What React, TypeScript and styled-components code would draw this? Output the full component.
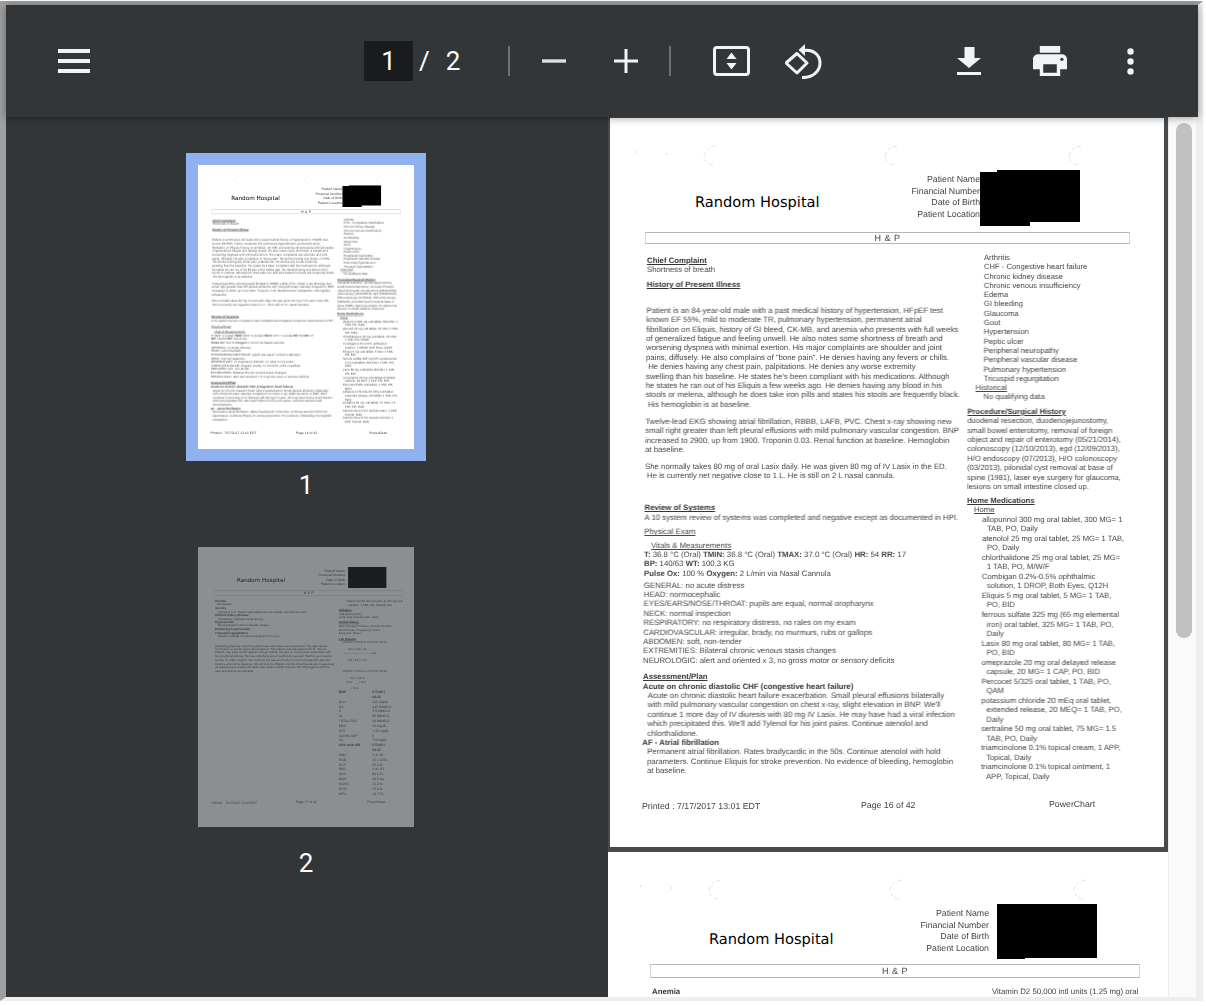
import React from "react";
import styled, { createGlobalStyle } from "styled-components";

const Global = createGlobalStyle`
  html, body { margin: 0; padding: 0; background: #fff; overflow: hidden; }
  * { box-sizing: border-box; }
`;

const Frame = styled.div`
  width: 1203px;
  height: 1000px;
  margin-top: 1px;
  border-style: solid;
  border-width: 4px 5px 4px 6px;
  border-color: #9f9f9f #eeeeee #eeeeee #9f9f9f;
  display: flex;
  flex-direction: column;
  background: #323639;
  font-family: Roboto, "Liberation Sans", sans-serif;
`;

const Toolbar = styled.header`
  height: 112px;
  flex: none;
  display: flex;
  align-items: center;
  padding-left: 52px;
  background: #323639;
  color: #fff;
  position: relative;
  z-index: 2;
  box-shadow: 0 1px 8px rgba(0, 0, 0, 0.38);
`;

const Icon = styled.svg<{ $ml?: number; $muted?: boolean }>`
  flex: none;
  display: block;
  margin-left: ${(p) => p.$ml ?? 0}px;
  fill: ${(p) => (p.$muted ? "#dcdedf" : "#f1f3f4")};
`;

const PageBox = styled.div`
  width: 49px;
  height: 40px;
  margin-left: 274px;
  background: #191b1c;
  font-size: 26px;
  line-height: 40px;
  text-align: center;
  flex: none;
`;

const ToolText = styled.span<{ $ml: number }>`
  font-size: 26px;
  line-height: 40px;
  margin-left: ${(p) => p.$ml}px;
  flex: none;
`;

const Divider = styled.div<{ $ml: number }>`
  width: 2px;
  height: 30px;
  margin-left: ${(p) => p.$ml}px;
  background: #6e7174;
  flex: none;
`;

const Main = styled.main`
  display: flex;
  height: 880px;
  flex: none;
`;

const Sidebar = styled.aside`
  width: 602px;
  flex: none;
  display: flex;
  flex-direction: column;
  align-items: center;
  padding: 48px 2px 0 0;
  background: #323639;
  overflow: hidden;
`;

const Thumb = styled.div<{ $h: number; $selected?: boolean }>`
  width: 216px;
  height: ${(p) => p.$h}px;
  flex: none;
  overflow: hidden;
  background: #fff;
  outline: ${(p) => (p.$selected ? "12px solid #8fb2ef" : "none")};
  opacity: ${(p) => (p.$selected ? 1 : 0.44)};
`;

const ThumbScale = styled.div<{ $s: number }>`
  transform: scale(${(p) => p.$s});
  transform-origin: 0 0;
  width: max-content;
`;

const ThumbLabel = styled.div`
  margin-top: 21px;
  margin-bottom: 47px;
  font-size: 26px;
  line-height: 30px;
  color: #fff;
  text-align: center;
`;

const Viewer = styled.section`
  width: 560px;
  flex: none;
  overflow: hidden;
  background: #484b4e;
  padding-top: 1px;
  display: flex;
  flex-direction: column;
  gap: 5px;
`;

const PageSlot = styled.div<{ $ml: number }>`
  flex: none;
  padding-left: ${(p) => p.$ml}px;
`;

const Sheet = styled.article<{ $w: number; $h: number }>`
  width: ${(p) => p.$w}px;
  height: ${(p) => p.$h}px;
  background: #fff;
  overflow: hidden;
  font-family: "Liberation Sans", Arial, sans-serif;
  font-size: 8.75px;
  color: #444;
  text-rendering: geometricPrecision;
`;

const Specks = styled.svg`
  display: block;
  fill: none;
  stroke: #dcdcdc;
  stroke-width: 0.8;
  stroke-dasharray: 5 2 3 3;
  filter: blur(0.4px);
`;

const HeaderRow = styled.div<{ $pl: number; $pr: number; $h: number }>`
  display: flex;
  align-items: flex-start;
  height: ${(p) => p.$h}px;
  padding-left: ${(p) => p.$pl}px;
  padding-right: ${(p) => p.$pr}px;
`;

const Title = styled.h1<{ $mt: number }>`
  flex: 1;
  margin: ${(p) => p.$mt}px 0 0;
  font-family: "DejaVu Sans", sans-serif;
  font-size: 14.6px;
  font-weight: 400;
  line-height: 18px;
  color: #000;
  white-space: nowrap;
`;

const Labels = styled.div<{ $mr: number }>`
  margin-top: 4.2px;
  margin-right: ${(p) => p.$mr}px;
  text-align: right;
  line-height: 11.6px;
  white-space: nowrap;
  filter: blur(0.4px);
`;

const Redaction = styled.svg`
  flex: none;
  display: block;
  fill: #000;
`;

const SectionBar = styled.div<{ $ml: number; $w: number; $mt: number; $h: number }>`
  margin-top: ${(p) => p.$mt}px;
  margin-left: ${(p) => p.$ml}px;
  width: ${(p) => p.$w}px;
  height: ${(p) => p.$h}px;
  border: 1px solid #b5b5b5;
  border-left-color: #d5d5d5;
  border-right-color: #d5d5d5;
  text-align: center;
  font-size: 9px;
  line-height: ${(p) => p.$h - 2}px;
  letter-spacing: 0.5px;
  filter: blur(0.35px);
`;

const Columns = styled.div<{ $mt: number; $pl: number }>`
  display: grid;
  grid-template-columns: 321px 1fr;
  margin-top: ${(p) => p.$mt}px;
  padding-left: ${(p) => p.$pl}px;
`;

const Column = styled.div<{ $skew: number; $pt?: number; $fs: number }>`
  transform: skewX(${(p) => p.$skew}deg);
  transform-origin: 0 0;
  padding-top: ${(p) => p.$pt ?? 0}px;
  font-size: ${(p) => p.$fs}px;
  filter: blur(0.4px);
  white-space: nowrap;
`;

const Block = styled.div<{ $mt?: number; $lh?: number }>`
  margin-top: ${(p) => p.$mt ?? 0}px;
  line-height: ${(p) => p.$lh ?? 9.4}px;
`;

const Line = styled.div<{ $i?: number; $b?: boolean; $u?: boolean }>`
  height: 1lh;
  padding-left: ${(p) => p.$i ?? 0}px;
  font-weight: ${(p) => (p.$b ? 700 : 400)};
  text-decoration: ${(p) => (p.$u ? "underline" : "none")};
  color: ${(p) => (p.$b ? "#333" : "inherit")};
`;

const LabRow = styled.div<{ $b?: boolean }>`
  display: grid;
  grid-template-columns: 87px 1fr;
  height: 12.5px;
  line-height: 12.5px;
  font-size: 8.75px;
  font-weight: ${(p) => (p.$b ? 700 : 400)};
`;

const Footer = styled.div<{ $pl: number; $mt: number; $c1: number; $c2: number }>`
  display: grid;
  grid-template-columns: ${(p) => p.$c1}px ${(p) => p.$c2}px 1fr;
  margin-top: ${(p) => p.$mt}px;
  padding-left: ${(p) => p.$pl}px;
  filter: blur(0.4px);
  line-height: 9.4px;
  white-space: nowrap;
`;

const FooterItem = styled.span<{ $drop: number }>`
  padding-top: ${(p) => p.$drop}px;
`;

const Scrollbar = styled.div`
  width: 30px;
  flex: none;
  background: #fafafa;
  border-left: 1px solid #efefef;
  border-right: 2px solid #eeeeee;
  padding: 6px 0 0 7px;
`;

const ScrollThumb = styled.div`
  width: 16px;
  height: 515px;
  border-radius: 8px;
  background: #c1c1c1;
`;

type L = { t: React.ReactNode; i?: number; b?: boolean; u?: boolean };
const l = (t: React.ReactNode, i?: number, b?: boolean, u?: boolean): L => ({ t, i, b, u });

const Lines = ({ items, mt, lh }: { items: L[]; mt?: number; lh?: number }) => (
  <Block $mt={mt} $lh={lh}>
    {items.map((x, n) => (
      <Line key={n} $i={x.i} $b={x.b} $u={x.u}>
        {x.t}
      </Line>
    ))}
  </Block>
);

const SpeckMarks = ({ shift, w }: { shift: number; w: number }) => (
  <Specks width={w} height={52} viewBox={`0 0 ${w} 52`}>
    {[100, 281, 465].map((x) => (
      <path
        key={x}
        transform={`translate(${x + shift} 38)`}
        d="M6 -10 Q-5 -9 -6 1 Q-5 8 3 9"
      />
    ))}
    <path d={`M${25 + shift} 34h1M${56 + shift} 36h1`} stroke="#aaa" />
  </Specks>
);

const PatientLabels = ({ mr }: { mr: number }) => (
  <Labels $mr={mr}>
    <div>Patient Name</div>
    <div>Financial Number</div>
    <div>Date of Birth</div>
    <div>Patient Location</div>
  </Labels>
);

const hpi = [
  "Patient is an 84-year-old male with a past medical history of hypertension, HFpEF test",
  "known EF 55%, mild to moderate TR, pulmonary hypertension, permanent atrial",
  "fibrillation on Eliquis, history of GI bleed, CK-MB, and anemia who presents with full weeks",
  "of generalized fatigue and feeling unwell.  He also notes some shortness of breath and",
  "worsening dyspnea with minimal exertion.  His major complaints are shoulder and joint",
  "pains, diffusely.  He also complains of \"bone pain\".  He denies having any fevers or chills.",
  "\u00a0He denies having any chest pain, palpitations.  He denies any worse extremity",
  "swelling than his baseline.  He states he's been compliant with his medications.  Although",
  "he states he ran out of his Eliquis a few weeks ago.  He denies having any blood in his",
  "stools or melena, although he does take iron pills and states his stools are frequently black.",
  "\u00a0His hemoglobin is at baseline.",
].map((t) => l(t));

const PageOne = () => (
  <Sheet $w={554} $h={729}>
    <SpeckMarks shift={0} w={554} />
    <HeaderRow $pl={85} $pr={84} $h={56}>
      <Title $mt={24}>Random Hospital</Title>
      <PatientLabels mr={0} />
      <Redaction width={100} height={56} viewBox="0 0 100 56">
        <polygon points="0,2 17,2 17,0 100,0 100,52 50,52 50,56 0,56" />
      </Redaction>
    </HeaderRow>
    <SectionBar $ml={35} $w={485} $mt={6} $h={12}>H &amp; P</SectionBar>
    <Columns $mt={9.35} $pl={37}>
      <Column $skew={-0.55} $pt={2.95} $fs={7.8}>
        <Lines items={[l("Chief Complaint", 0, true, true), l("Shortness of breath")]} />
        <Lines mt={5.2} items={[l("History of Present Illness", 0, true, true)]} />
        <Lines mt={16.6} items={hpi} />
        <Lines
          mt={7.6}
          items={[
            l("Twelve-lead EKG showing atrial fibrillation, RBBB, LAFB, PVC.  Chest x-ray showing new"),
            l("small right greater than left pleural effusions with mild pulmonary vascular congestion.  BNP"),
            l("increased to 2900, up from 1900.  Troponin 0.03.  Renal function at baseline.  Hemoglobin"),
            l("at baseline."),
          ]}
        />
        <Lines
          mt={7.4}
          items={[
            l("She normally takes 80 mg of oral Lasix daily.  He was given 80 mg of IV Lasix in the ED."),
            l("He is currently net negative close to 1 L.  He is still on 2 L nasal cannula.", 2),
          ]}
        />
        <Lines
          mt={22.9}
          items={[
            l("Review of Systems", 0, true, true),
            l("A 10 system review of systems was completed and negative except as documented in HPI."),
          ]}
        />
        <Lines mt={5.2} items={[l("Physical Exam", 0, false, true)]} />
        <Lines
          mt={3.9}
          items={[
            l("Vitals & Measurements", 7, false, true),
            l(<><b>T:</b> 36.8 °C (Oral) <b>TMIN:</b> 36.8 °C (Oral) <b>TMAX:</b> 37.0 °C (Oral) <b>HR:</b> 54 <b>RR:</b> 17</>),
            l(<><b>BP:</b> 140/63 <b>WT:</b> 100.3 KG</>),
            l(<><b>Pulse Ox:</b> 100 % <b>Oxygen:</b> 2 L/min via Nasal Cannula</>),
          ]}
        />
        <Lines
          mt={2.4}
          items={[
            "GENERAL: no acute distress",
            "HEAD: normocephalic",
            "EYES/EARS/NOSE/THROAT: pupils are equal, normal oropharynx",
            "NECK: normal inspection",
            "RESPIRATORY: no respiratory distress, no rales on my exam",
            "CARDIOVASCULAR: irregular, brady, no murmurs, rubs or gallops",
            "ABDOMEN: soft, non-tender",
            "EXTREMITIES: Bilateral chronic venous stasis changes",
            "NEUROLOGIC: alert and oriented x 3, no gross motor or sensory deficits",
          ].map((t) => l(t))}
        />
        <Lines
          mt={7.1}
          items={[
            l("Assessment/Plan", 0, true, true),
            l("Acute on chronic diastolic CHF (congestive heart failure)", 0, true),
            l("Acute on chronic diastolic heart failure exacerbation.  Small pleural effusions bilaterally", 5),
            l("with mild pulmonary vascular congestion on chest x-ray, slight elevation in BNP.  We'll", 5),
            l("continue 1 more day of IV diuresis with 80 mg IV Lasix.  He may have had a viral infection", 5),
            l("which precipitated this.  We'll add Tylenol for his joint pains.  Continue atenolol and", 5),
            l("chlorthalidone.", 5),
            l("AF - Atrial fibrillation", 0, true),
            l("Permanent atrial fibrillation.  Rates bradycardic in the 50s.  Continue atenolol with hold", 5),
            l("parameters.  Continue Eliquis for stroke prevention.  No evidence of bleeding, hemoglobin", 5),
            l("at baseline.", 5),
          ]}
        />
      </Column>
      <Column $skew={-0.2} $fs={7.65}>
        <Lines
          lh={9.3}
          items={[
            l("Arthritis", 16),
            l("CHF - Congestive heart failure", 16),
            l("Chronic kidney disease", 16),
            l("Chronic venous insufficiency", 16),
            l("Edema", 16),
            l("GI bleeding", 16),
            l("Glaucoma", 16),
            l("Gout", 16),
            l("Hypertension", 16),
            l("Peptic ulcer", 16),
            l("Peripheral neuropathy", 16),
            l("Peripheral vascular disease", 16),
            l("Pulmonary hypertension", 16),
            l("Tricuspid regurgitation", 16),
            l("Historical", 8, false, true),
            l("No qualifying data", 16),
          ]}
        />
        <Lines
          mt={5.15}
          items={[
            l("Procedure/Surgical History", 0, true, true),
            l("duodenal resection, duodenojejunostomy,"),
            l("small bowel enterotomy, removal of foreign"),
            l("object and repair of enterotomy (05/21/2014),"),
            l("colonoscopy (12/10/2013), egd (12/09/2013),"),
            l("H/O endoscopy (07/2013), H/O colonoscopy"),
            l("(03/2013), pilonidal cyst removal at base of"),
            l("spine (1981), laser eye surgery for glaucoma,"),
            l("lesions on small intestine closed up."),
          ]}
        />
        <Lines
          mt={4.4}
          lh={9.52}
          items={[
            l("Home Medications", 0, true, true),
            l("Home", 7, false, true),
            l("allopurinol 300 mg oral tablet, 300 MG= 1", 15),
            l("TAB, PO, Daily", 20),
            l("atenolol 25 mg oral tablet, 25 MG= 1 TAB,", 15),
            l("PO, Daily", 20),
            l("chlorthalidone 25 mg oral tablet, 25 MG=", 15),
            l("1 TAB, PO, M/W/F", 20),
            l("Combigan 0.2%-0.5% ophthalmic", 15),
            l("solution, 1 DROP, Both Eyes, Q12H", 20),
            l("Eliquis 5 mg oral tablet, 5 MG= 1 TAB,", 15),
            l("PO, BID", 20),
            l("ferrous sulfate 325 mg (65 mg elemental", 15),
            l("iron) oral tablet, 325 MG= 1 TAB, PO,", 20),
            l("Daily", 20),
            l("Lasix 80 mg oral tablet, 80 MG= 1 TAB,", 15),
            l("PO, BID", 20),
            l("omeprazole 20 mg oral delayed release", 15),
            l("capsule, 20 MG= 1 CAP, PO, BID", 20),
            l("Percocet 5/325 oral tablet, 1 TAB, PO,", 15),
            l("QAM", 20),
            l("potassium chloride 20 mEq oral tablet,", 15),
            l("extended release, 20 MEQ= 1 TAB, PO,", 20),
            l("Daily", 20),
            l("sertraline 50 mg oral tablet, 75 MG= 1.5", 15),
            l("TAB, PO, Daily", 20),
            l("triamcinolone 0.1% topical cream, 1 APP,", 15),
            l("Topical, Daily", 20),
            l("triamcinolone 0.1% topical ointment, 1", 15),
            l("APP, Topical, Daily", 20),
          ]}
        />
      </Column>
    </Columns>
    <Footer $pl={32} $mt={18} $c1={219} $c2={188}>
      <FooterItem $drop={2}>Printed : 7/17/2017 13:01 EDT</FooterItem>
      <FooterItem $drop={1}>Page 16 of 42</FooterItem>
      <FooterItem $drop={0}>PowerChart</FooterItem>
    </Footer>
  </Sheet>
);

const labs: [string, string, boolean?][] = [
  ["BMP", "07/16/17", true],
  ["", "08:32", true],
  ["GLU", "102 mg/dL"],
  ["NA", "142 MMOL/L"],
  ["K", "3.9 MMOL/L"],
  ["CL", "98 MMOL/L"],
  ["TOTAL CO2", "40 MMOL/L"],
  ["BUN", "26 mg/dL"],
  ["CRT", "1.20 mg/dL"],
  ["ANION GAP", "5"],
  ["CA", "7.8 mg/dL"],
  ["CBC with diff", "07/16/17", true],
  ["", "08:32", true],
  ["WBC", "3.4 / dl"],
  ["HGB", "10.1 G/DL"],
  ["HCT", "32.4 %"],
  ["RBC", "3.41 /FL"],
  ["MCV", "95.0 FL"],
  ["MCH", "29.5 pg"],
  ["MCHC", "31.2 %"],
  ["RDW", "13.9 %"],
  ["MPV", "10.7 FL"],
];

const PageTwo = () => (
  <Sheet $w={560} $h={720}>
    <SpeckMarks shift={7} w={560} />
    <HeaderRow $pl={101} $pr={71} $h={55}>
      <Title $mt={27}>Random Hospital</Title>
      <PatientLabels mr={8} />
      <Redaction width={100} height={55} viewBox="0 0 100 55">
        <polygon points="0,0 100,0 100,54 28,54 28,55 0,55" />
      </Redaction>
    </HeaderRow>
    <SectionBar $ml={42} $w={490} $mt={5} $h={14}>H &amp; P</SectionBar>
    <Columns $mt={9.3} $pl={44}>
      <Column $skew={0} $fs={7.8}>
        <Lines
          lh={9.15}
          items={[
            l("Anemia", 0, true),
            l("At baseline.", 5),
            l("Anemia", 0, true),
            l("Typical of iron.  Patient also takes Ferrous sulfate, will add folic acid.", 7),
            l("Chronic kidney disease", 0, true),
            l("At baseline.  Maintain renal dosing.", 7),
            l("Hypertension", 0, true),
            l("Blood pressure within tolerable targets.", 7),
            l("Pulmonary hypertension", 0, true),
            l("Tricuspid regurgitation", 0, true),
            l("Noted moderate on echocardiogram from prior.", 7),
          ]}
        />
        <Lines
          mt={14.8}
          items={[
            l("Attending physician note the patient was interviewed and examined.  The appropriate"),
            l("information in power chart was reviewed.  The patient was discussed with Dr. Steven."),
            l("Patient may have a mild degree of heart failure.  He was on some lower extremities with"),
            l("his peripheral edema.  He has underlying atrial insufficiency as well.  We'll try and ensure"),
            l("he has his daily weights.  We continue his rate and rhythm control on beta with atenolol."),
            l("Anemia around his baseline.  We will stop his Eliquis until the blood levels are in stationary"),
            l("as adjusted and ensure the heart rate under a better monitor.  He will progress with his"),
            l("care and activity as tolerated."),
          ]}
        />
      </Column>
      <Column $skew={0} $fs={7.85}>
        <Lines
          items={[
            l("Vitamin D2 50,000 intl units (1.25 mg) oral", 19),
            l("capsule, 1 TAB, PO, Weekly-Tue", 24),
          ]}
        />
        <Lines
          mt={5.2}
          items={[l("Allergies", 0, true, true), l("citalopram (rash)"), l("sulfa drug (muscle pain; rash)")]}
        />
        <Lines
          mt={3.8}
          items={[
            l("Social History", 0, true, true),
            l("Ever Smoked Tobacco: Former Smoker"),
            l("Alcohol Use: Frequency: None"),
            l("Drug use: Never"),
          ]}
        />
        <Lines mt={4.8} items={[l("Lab Results", 0, true, true), l("07/16/17 05:00 to 07/17/17 05:00", 10)]} />
        <Lines mt={8.8} items={[l("141 | 101 | 26", 24), l("\u2014\u2014\u2014\u2014\u2014\u2014\u2014\u2014\u2014 102", 12)]} />
        <Lines mt={8.2} items={[l("3.9 | 48 | 1.20", 24)]} />
        <Lines mt={19.1} items={[l("07/16/17 05:00 to 07/17/17 05:00", 10)]} />
        <Lines mt={9.1} items={[l("10.1 / 30.4", 30), l("3.4 / ___ \\ 101", 20)]} />
        <Lines mt={7} items={[l("/ 32.4", 32)]} />
        {labs.map(([a, b, bold], n) => (
          <LabRow key={n} $b={bold}>
            <span>{a}</span>
            <span>{b}</span>
          </LabRow>
        ))}
      </Column>
    </Columns>
    <Footer $pl={35} $mt={12} $c1={219} $c2={185}>
      <FooterItem $drop={1}>Printed : 7/17/2017 13:01 EDT</FooterItem>
      <FooterItem $drop={0}>Page 17 of 42</FooterItem>
      <FooterItem $drop={0}>PowerChart</FooterItem>
    </Footer>
  </Sheet>
);

export default function App() {
  return (
    <>
      <Global />
      <Frame>
        <Toolbar>
          <Icon width={32} height={24} viewBox="0 0 32 24">
            <rect y="0" width="32" height="4" />
            <rect y="10" width="32" height="4" />
            <rect y="20" width="32" height="4" />
          </Icon>
          <PageBox>1</PageBox>
          <ToolText $ml={6}>/</ToolText>
          <ToolText $ml={16}>2</ToolText>
          <Divider $ml={48} />
          <Icon $ml={32} $muted width={24} height={4} viewBox="0 0 24 4">
            <rect width="24" height="3.4" y="0.3" />
          </Icon>
          <Icon $ml={48} width={24} height={24} viewBox="0 0 24 24">
            <rect y="10.5" width="24" height="3" />
            <rect x="10.5" width="3" height="24" />
          </Icon>
          <Divider $ml={31} />
          <Icon $ml={41.5} width={37} height={30} viewBox="0 0 37 30">
            <rect x="1.5" y="1.5" width="34" height="27" rx="2.5" fill="none" stroke="#f1f3f4" strokeWidth="3" />
            <path d="M18.5 6.5l5 6.5h-10zM18.5 23.5l5-6.5h-10z" />
          </Icon>
          <Icon $ml={35} width={37} height={36} viewBox="0 0 37 36">
            <path d="M1 20 L12 10.5 L22 20 L12 30 Z" fill="none" stroke="#f1f3f4" strokeWidth="3" strokeLinejoin="round" />
            <path d="M19 7.5 C28 6 35 12 35 20 C35 28 28 35 17 34.5" fill="none" stroke="#f1f3f4" strokeWidth="3" />
            <path d="M20 1 L20 13 L13.5 7 Z" />
          </Icon>
          <Icon $ml={135.5} width={24} height={28} viewBox="0 0 24 28">
            <path d="M7.5 0h10v11h6.5L12 21 0 11h7.5zM0 25h24v3H0z" />
          </Icon>
          <Icon $ml={51.5} width={34} height={30} viewBox="2 3 20 18" preserveAspectRatio="none">
            <path d="M19 8H5c-1.66 0-3 1.34-3 3v6h4v4h12v-4h4v-6c0-1.66-1.34-3-3-3zm-3 11H8v-5h8v5zm3-7c-.55 0-1-.45-1-1s.45-1 1-1 1 .45 1 1-.45 1-1 1zm-1-9H6v4h12V3z" />
          </Icon>
          <Icon $ml={60} width={7} height={27} viewBox="0 0 7 27">
            <circle cx="3.5" cy="3.5" r="3.2" />
            <circle cx="3.5" cy="13.5" r="3.2" />
            <circle cx="3.5" cy="23.5" r="3.2" />
          </Icon>
        </Toolbar>
        <Main>
          <Sidebar>
            <Thumb $h={284} $selected>
              <ThumbScale $s={216 / 554}>
                <PageOne />
              </ThumbScale>
            </Thumb>
            <ThumbLabel>1</ThumbLabel>
            <Thumb $h={280}>
              <ThumbScale $s={216 / 560}>
                <PageTwo />
              </ThumbScale>
            </Thumb>
            <ThumbLabel>2</ThumbLabel>
          </Sidebar>
          <Viewer>
            <PageSlot $ml={2}>
              <PageOne />
            </PageSlot>
            <PageSlot $ml={0}>
              <PageTwo />
            </PageSlot>
          </Viewer>
          <Scrollbar>
            <ScrollThumb />
          </Scrollbar>
        </Main>
      </Frame>
    </>
  );
}
